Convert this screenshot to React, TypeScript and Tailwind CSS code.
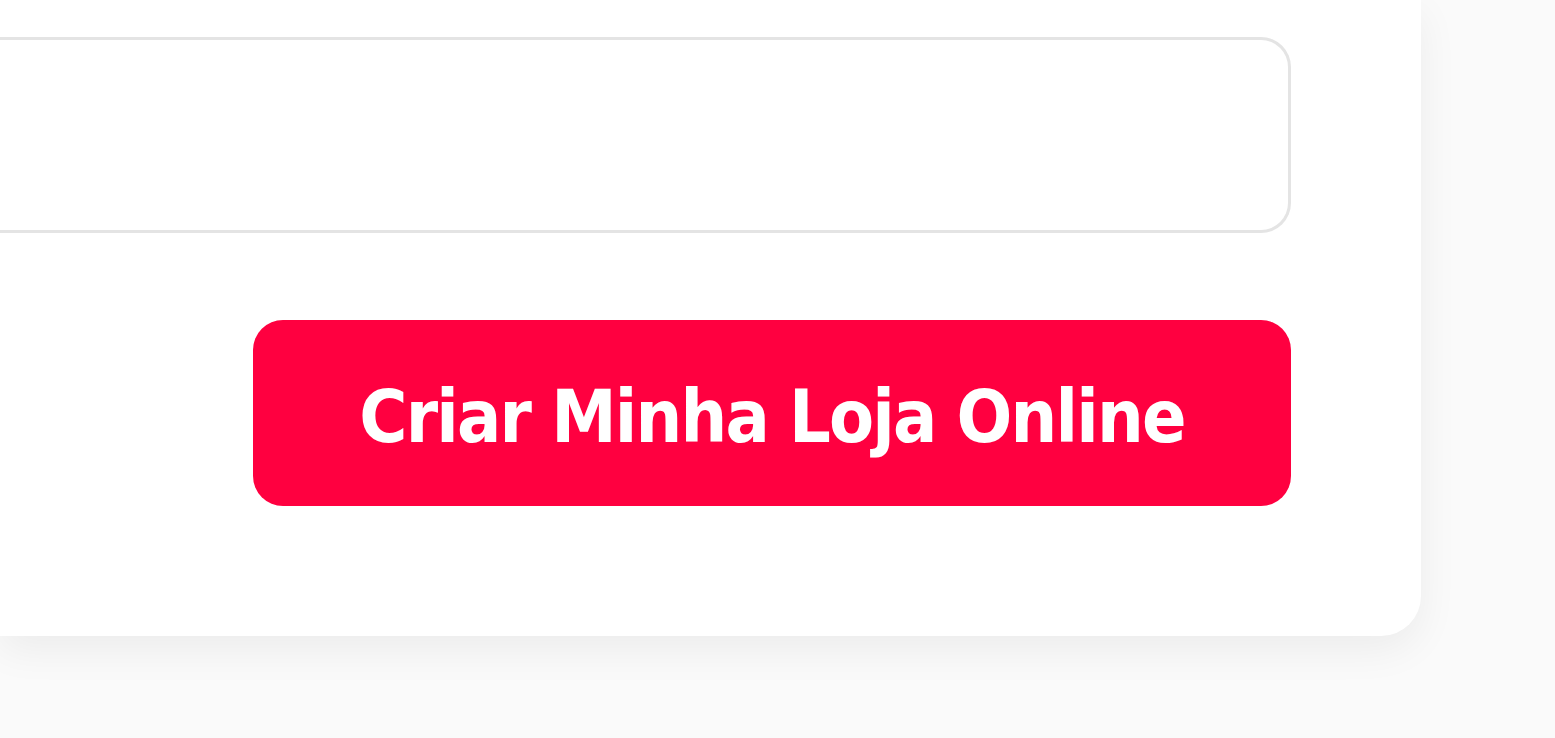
import { FC } from "react";

const App: FC = () => {
  return (
    <div className="min-h-[738px] w-full overflow-hidden bg-[#fafafa]">
      {/* Card (left and top edges fall outside the viewport) */}
      <div className="flex w-[1421px] flex-col items-end rounded-br-[40px] bg-white pt-[37px] pr-[130px] pb-[130px] shadow-[0_14px_40px_rgba(0,0,0,0.06)]">
        <div className="h-[196px] w-full rounded-r-[30px] border-y-[3px] border-r-[3px] border-[#e4e4e4] bg-white"></div>

        <button
          className="mt-[87px] flex h-[186px] w-[1038px] items-center justify-center rounded-[30px] bg-[#ff0040] pt-[6px] text-white"
          style={{ fontFamily: '"DejaVu Sans Condensed", "DejaVu Sans", sans-serif' }}
        >
          <span className="text-[73px] font-bold leading-none tracking-[-1.8px] [font-stretch:condensed]">
            Criar Minha Loja Online
          </span>
        </button>
      </div>
    </div>
  );
};

export default App;
